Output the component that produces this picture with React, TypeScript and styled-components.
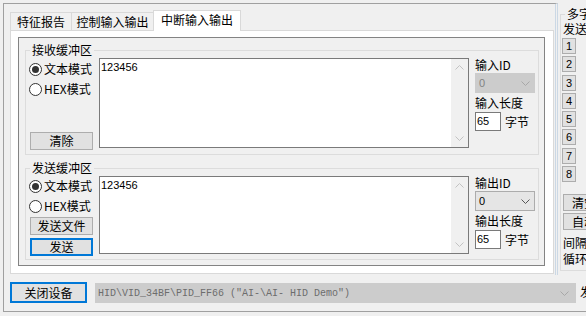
import React from 'react';
import styled, { createGlobalStyle } from 'styled-components';

const GlobalStyle = createGlobalStyle`
  html, body {
    margin: 0;
    padding: 0;
    background: #f0f0f0;
  }
  body {
    width: 586px;
    height: 316px;
    overflow: hidden;
    font-family: "Noto Sans CJK SC", "Liberation Sans", sans-serif;
    font-size: 12px;
    color: #000;
  }
  * {
    box-sizing: border-box;
  }
`;

const Window = styled.div`
  margin: 3px 0 0 3px;
  width: 583px;
  height: 309px;
  border-left: 1px solid #a0a0a0;
  border-bottom: 1px solid #a0a0a0;
  display: flex;
  flex-direction: column;
`;

const TopRow = styled.div`
  display: flex;
  height: 272px;
`;

const LeftPane = styled.div`
  width: 554px;
  flex: none;
  border-top: 1px solid #a0a0a0;
  border-right: 3px double #cbd8e5;
  padding: 6px 1px 1px 6px;
  display: flex;
  flex-direction: column;
`;

const TabStrip = styled.div`
  display: flex;
  align-items: flex-end;
  height: 20px;
`;

const Tab = styled.div<{ $active?: boolean; $w: number }>`
  position: relative;
  width: ${(p) => p.$w}px;
  height: ${(p) => (p.$active ? 21 : 18)}px;
  margin-left: -1px;
  margin-bottom: ${(p) => (p.$active ? -1 : 0)}px;
  padding-bottom: ${(p) => (p.$active ? 2 : 0)}px;
  z-index: ${(p) => (p.$active ? 1 : 0)};
  border: 1px solid #d9d9d9;
  border-bottom: none;
  background: ${(p) => (p.$active ? '#ffffff' : '#f0f0f0')};
  display: flex;
  align-items: center;
  justify-content: center;
  line-height: 14px;
  &:first-child {
    margin-left: 0;
  }
`;

const TabPage = styled.div`
  flex: 1;
  border: 1px solid #d9d9d9;
  background: #ffffff;
  padding: 6px 8px 7px 7px;
  display: flex;
`;

const Panel = styled.div`
  flex: 1;
  border: 1px solid #838383;
  background: #f0f0f0;
  padding: 5px 5px 5px 6px;
  display: flex;
  flex-direction: column;
  gap: 6px;
`;

const Group = styled.fieldset<{ $h: number }>`
  margin: 0;
  padding: 1px 3px 0 4px;
  border: 1px solid #dcdcdc;
  height: ${(p) => p.$h}px;
  min-width: 0;
`;

const Legend = styled.legend`
  padding: 0 2px;
  line-height: 14px;
`;

const BufferGrid = styled.div`
  display: grid;
  grid-template-columns: 63px 370px 60px;
  column-gap: 6px;
  align-items: start;
`;

const ModeCol = styled.div<{ $top: number }>`
  display: flex;
  flex-direction: column;
  align-items: flex-start;
  padding-top: ${(p) => p.$top}px;
`;

const RadioRow = styled.div`
  height: 20px;
  display: flex;
  align-items: center;
  gap: 2px;
  margin-left: -1px;
  line-height: 14px;
`;

const RadioDot = styled.span<{ $checked?: boolean }>`
  width: 13px;
  height: 13px;
  border: 1px solid #333333;
  border-radius: 50%;
  background: #ffffff;
  display: flex;
  align-items: center;
  justify-content: center;
  &::after {
    content: '';
    width: 7px;
    height: 7px;
    border-radius: 50%;
    background: ${(p) => (p.$checked ? '#333333' : 'transparent')};
  }
`;

const Button = styled.div<{ $focus?: boolean; $top: number; $w?: number; $h?: number }>`
  flex: none;
  width: ${(p) => p.$w ?? 63}px;
  height: ${(p) => p.$h ?? 18}px;
  margin-top: ${(p) => p.$top}px;
  border: ${(p) => (p.$focus ? '2px solid #0078d7' : '1px solid #adadad')};
  background: #e1e1e1;
  display: flex;
  align-items: center;
  justify-content: center;
  line-height: 14px;
  white-space: nowrap;
`;

const TextBox = styled.div<{ $h: number }>`
  height: ${(p) => p.$h}px;
  border: 1px solid #7a7a7a;
  background: #ffffff;
  display: flex;
`;

const TextContent = styled.div`
  flex: 1;
  padding: 2px 1px;
  font: 11px/13px "Liberation Sans", sans-serif;
`;

const ScrollBar = styled.div`
  width: 17px;
  background: #f0f0f0;
  display: flex;
  flex-direction: column;
  justify-content: space-between;
`;

const ScrollArrow = styled.div`
  height: 17px;
  display: flex;
  align-items: center;
  justify-content: center;
`;

const SideCol = styled.div`
  display: flex;
  flex-direction: column;
  align-items: flex-start;
`;

const SideLabel = styled.div`
  line-height: 14px;
  white-space: nowrap;
`;

const Select = styled.div<{ $disabled?: boolean }>`
  width: 60px;
  height: 20px;
  margin: 1px 0 3px;
  padding: 0 4px 0 3px;
  display: flex;
  align-items: center;
  justify-content: space-between;
  background: ${(p) => (p.$disabled ? '#cccccc' : '#e5e5e5')};
  border: 1px solid ${(p) => (p.$disabled ? '#cccccc' : '#acacac')};
  color: ${(p) => (p.$disabled ? '#838383' : '#000000')};
  font: 11px "Liberation Sans", sans-serif;
`;

const LengthRow = styled.div`
  margin-top: 2px;
  display: flex;
  align-items: center;
  gap: 4px;
`;

const NumInput = styled.div`
  width: 26px;
  height: 19px;
  border: 1px solid #7a7a7a;
  background: #ffffff;
  padding-left: 1px;
  font: 11px/17px "Liberation Sans", sans-serif;
`;

const RightPanel = styled.div`
  flex: 1;
  overflow: hidden;
  padding: 5px 0 4px 2px;
  display: flex;
`;

const SideGroup = styled.fieldset`
  margin: 0;
  padding: 0 0 0 1px;
  width: 90px;
  flex: none;
  border: 1px solid #dcdcdc;
  display: flex;
  flex-direction: column;
  align-items: flex-start;
`;

const SideLegend = styled.legend`
  margin-left: 3px;
  padding: 0 2px;
  line-height: 12px;
  white-space: nowrap;
`;

const SideText = styled.div<{ $top: number }>`
  margin-top: ${(p) => p.$top}px;
  padding-left: 1px;
  line-height: 14px;
  white-space: nowrap;
`;

const KeyList = styled.div`
  margin-top: 2px;
  display: flex;
  flex-direction: column;
  gap: 2.3px;
`;

const KeyButton = styled.div`
  width: 14px;
  height: 16px;
  border: 1px solid #adadad;
  background: #e1e1e1;
  display: flex;
  align-items: center;
  justify-content: center;
  font: 11px "Liberation Sans", sans-serif;
`;

const SideButton = styled.div<{ $top: number }>`
  width: 60px;
  height: 17px;
  margin-top: ${(p) => p.$top}px;
  margin-left: 1px;
  border: 1px solid #adadad;
  background: #e1e1e1;
  padding-left: 8px;
  display: flex;
  align-items: center;
  line-height: 14px;
  white-space: nowrap;
`;

const BottomBar = styled.div`
  flex: 1;
  padding: 7px 0 0 6px;
  display: flex;
  align-items: flex-start;
  overflow: hidden;
`;

const DeviceCombo = styled.div`
  width: 481px;
  height: 20px;
  margin: 1px 0 0 8px;
  padding: 0 6px 0 2px;
  flex: none;
  background: #cccccc;
  border: 1px solid #cccccc;
  color: #6d6d6d;
  display: flex;
  align-items: center;
  justify-content: space-between;
  font: 10px "Liberation Mono", monospace;
  white-space: pre;
`;

const BarLabel = styled.div`
  flex: none;
  margin: 3px 0 0 4px;
  line-height: 14px;
  white-space: nowrap;
`;

function Chevron({ up, color }: { up?: boolean; color: string }) {
  return (
    <svg width="9" height="5" viewBox="0 0 9 5">
      <polyline
        points={up ? '0.5,4.5 4.5,0.5 8.5,4.5' : '0.5,0.5 4.5,4.5 8.5,0.5'}
        fill="none"
        stroke={color}
        strokeWidth="1"
      />
    </svg>
  );
}

function Radio({ checked, label }: { checked?: boolean; label: string }) {
  return (
    <RadioRow>
      <RadioDot $checked={checked} />
      <span>{label}</span>
    </RadioRow>
  );
}

function BufferBox({ h, text }: { h: number; text: string }) {
  return (
    <TextBox $h={h}>
      <TextContent>{text}</TextContent>
      <ScrollBar>
        <ScrollArrow><Chevron up color="#c2c2c2" /></ScrollArrow>
        <ScrollArrow><Chevron color="#c2c2c2" /></ScrollArrow>
      </ScrollBar>
    </TextBox>
  );
}

function SideFields({ dir, disabled }: { dir: string; disabled?: boolean }) {
  return (
    <SideCol>
      <SideLabel>{dir}ID</SideLabel>
      <Select $disabled={disabled}>
        <span>0</span>
        <Chevron color={disabled ? '#a8a8a8' : '#555555'} />
      </Select>
      <SideLabel>{dir}长度</SideLabel>
      <LengthRow>
        <NumInput>65</NumInput>
        <span>字节</span>
      </LengthRow>
    </SideCol>
  );
}

export default function App() {
  return (
    <>
      <GlobalStyle />
      <Window>
        <TopRow>
          <LeftPane>
            <TabStrip>
              <Tab $w={62}>特征报告</Tab>
              <Tab $w={83}>控制输入输出</Tab>
              <Tab $w={88} $active>中断输入输出</Tab>
            </TabStrip>
            <TabPage>
              <Panel>
                <Group $h={112}>
                  <Legend>接收缓冲区</Legend>
                  <BufferGrid>
                    <ModeCol $top={1}>
                      <Radio checked label="文本模式" />
                      <Radio label="HEX模式" />
                      <Button $top={33}>清除</Button>
                    </ModeCol>
                    <BufferBox h={90} text="123456" />
                    <SideFields dir="输入" disabled />
                  </BufferGrid>
                </Group>
                <Group $h={99}>
                  <Legend>发送缓冲区</Legend>
                  <BufferGrid>
                    <ModeCol $top={0}>
                      <Radio checked label="文本模式" />
                      <Radio label="HEX模式" />
                      <Button $top={1}>发送文件</Button>
                      <Button $top={3} $focus>发送</Button>
                    </ModeCol>
                    <BufferBox h={78} text="123456" />
                    <SideFields dir="输出" />
                  </BufferGrid>
                </Group>
              </Panel>
            </TabPage>
          </LeftPane>
          <RightPanel>
            <SideGroup>
              <SideLegend>多字符串</SideLegend>
              <SideText $top={2}>发送区</SideText>
              <KeyList>
                {['1', '2', '3', '4', '5', '6', '7', '8'].map((k) => (
                  <KeyButton key={k}>{k}</KeyButton>
                ))}
              </KeyList>
              <SideButton $top={12}>清空</SideButton>
              <SideButton $top={2}>自动发送</SideButton>
              <SideText $top={6}>间隔时间</SideText>
              <SideText $top={2}>循环次数</SideText>
            </SideGroup>
          </RightPanel>
        </TopRow>
        <BottomBar>
          <Button $top={0} $w={77} $h={21} $focus>关闭设备</Button>
          <DeviceCombo>
            <span>HID\VID_34BF\PID_FF66 ("AI-\AI- HID Demo")</span>
            <Chevron color="#a8a8a8" />
          </DeviceCombo>
          <BarLabel>发送</BarLabel>
        </BottomBar>
      </Window>
    </>
  );
}
